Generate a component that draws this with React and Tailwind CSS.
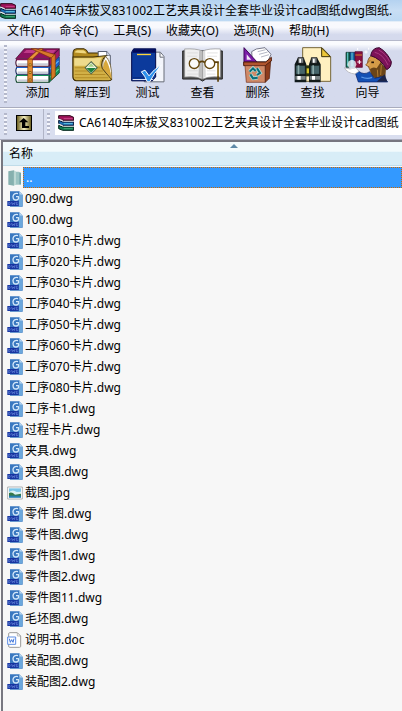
const menus = ["文件(F)", "命令(C)", "工具(S)", "收藏夹(O)", "选项(N)", "帮助(H)"];

const files = [
    "090.dwg", "100.dwg", "工序010卡片.dwg", "工序020卡片.dwg", "工序030卡片.dwg",
    "工序040卡片.dwg", "工序050卡片.dwg", "工序060卡片.dwg", "工序070卡片.dwg",
    "工序080卡片.dwg", "工序卡1.dwg", "过程卡片.dwg", "夹具.dwg", "夹具图.dwg",
    "截图.jpg", "零件 图.dwg", "零件图.dwg", "零件图1.dwg", "零件图2.dwg",
    "零件图11.dwg", "毛坯图.dwg", "说明书.doc", "装配图.dwg", "装配图2.dwg",
];

const BooksIcon = () => (
    <svg viewBox="0 0 134 104" className="w-[45px] h-[35px]">
        <path d="M28 2H132L102 32H2z" fill="#8e1260" stroke="#3a0424" strokeWidth="2" />
        <path d="M34 6H66L56 15H25zM96 6H122L114 15H86z" fill="#c03a88" />
        <path d="M102 32L132 3V24L102 53z" fill="#a01868" stroke="#3a0424" strokeWidth="2" />
        <path d="M102 56L132 26V50L102 78z" fill="#1b62cc" stroke="#06184c" strokeWidth="2" />
        <path d="M102 80L132 52V74L102 102z" fill="#12905a" stroke="#043018" strokeWidth="2" />
        <path d="M105 63L130 38" stroke="#67b8f4" strokeWidth="3" />
        <path d="M105 87L130 63" stroke="#5fd89a" strokeWidth="3" />
        <path d="M5 34H101V54H5Q0 44 5 34z" fill="#fff" stroke="#3a0424" strokeWidth="3" />
        <path d="M5 58H101V78H5Q0 68 5 58z" fill="#fff" stroke="#0a1c50" strokeWidth="3" />
        <path d="M5 82H101V102H5Q0 92 5 82z" fill="#fff" stroke="#063c20" strokeWidth="3" />
        <path d="M8 48H98M8 72H98M8 96H98" stroke="#c9ccd8" strokeWidth="5" />
        <path d="M4 35H102" stroke="#a01868" strokeWidth="3" />
        <path d="M4 58H102" stroke="#1b62cc" strokeWidth="3" />
        <path d="M4 82H102" stroke="#12905a" strokeWidth="3" />
        <path d="M38 33L72 2H84L52 33z" fill="#e9953c" stroke="#7c3404" strokeWidth="2" />
        <path d="M48 2H62L120 20L108 30z" fill="#d8782c" stroke="#7c3404" strokeWidth="2" />
        <path d="M38 33H52V102H38z" fill="#e38c30" stroke="#7c3404" strokeWidth="2" />
        <path d="M108 29L120 18V83L108 95z" fill="#d57824" stroke="#7c3404" strokeWidth="2" />
        <path d="M42 47h6v6h-6zM42 70h6v6h-6zM42 92h6v6h-6z" fill="#ffe95a" stroke="#6c3400" strokeWidth="2" />
    </svg>
);

const ExtractIcon = () => (
    <svg viewBox="0 0 122 100" className="w-[41px] h-[34px]">
        <path d="M3 14Q4 3 14 2H36Q44 4 48 14H88V96H12Q3 94 3 84z" fill="#b28a20" stroke="#3c2c04" strokeWidth="3" />
        <path d="M8 13Q10 7 16 6H34Q41 8 43 16z" fill="#f0d880" />
        <path d="M78 10H103L114 22V94H78z" fill="#fff" stroke="#596072" strokeWidth="3" />
        <path d="M103 10V22H114" fill="#c8d0e0" stroke="#596072" strokeWidth="2" />
        <path d="M92 30H109M96 36H109" stroke="#aab5cc" strokeWidth="3" />
        <path d="M3 26H62L102 22Q84 36 90 60L118 92Q116 98 106 97H12Q3 95 3 86z" fill="#d2b046" stroke="#3c2c04" strokeWidth="3" />
        <path d="M7 30H68L90 28Q80 40 83 52H7z" fill="#efdb8c" />
        <path d="M8 58H84M8 68H92M8 78H99M8 88H108" stroke="#b48c26" strokeWidth="3" />
        <path d="M92 60Q88 40 100 24Q120 44 118 92z" fill="#fff" stroke="#604606" strokeWidth="2" />
        <path d="M92 60Q94 42 101 34Q114 58 118 92z" fill="#d8a83c" />
        <path d="M57 40L75 58L57 76L39 58z" fill="#edf6df" stroke="#4d654a" strokeWidth="3" />
        <path d="M43 59H71L57 73z" fill="#1c8040" />
        <path d="M57 45L66 55H48z" fill="#a8cf88" />
    </svg>
);

const TestIcon = () => (
    <svg viewBox="0 0 102 104" className="w-[34px] h-[35px]">
        <path d="M62 12H88L99 25V101H40V12z" fill="#f3f5fb" stroke="#686d78" strokeWidth="3" />
        <path d="M87 13V27H98" fill="#fff" stroke="#686d78" strokeWidth="3" />
        <path d="M8 2H74V86L64 98H2V12z" fill="#0c3a9c" stroke="#000848" strokeWidth="3" />
        <path d="M8 3H73V14H4z" fill="#02095a" />
        <path d="M18 17H60V21H18z" fill="#ffd43a" />
        <path d="M6 89H69" stroke="#0a2878" strokeWidth="3" />
        <path d="M5 94H67" stroke="#d8e0f2" strokeWidth="3" />
        <path d="M31 71L42 66L54 83Q68 63 92 50Q68 76 56 101H49Q42 83 31 71z" fill="#2d91ed" stroke="#fff" strokeWidth="3" />
    </svg>
);

const ViewIcon = () => (
    <svg viewBox="0 0 124 104" className="w-[41px] h-[35px]">
        <path d="M2 8H122V93H72L62 99L52 93H2z" fill="#555" stroke="#222" strokeWidth="3" />
        <path d="M8 2Q42 0 61 8V93Q41 83 8 87z" fill="#efefef" stroke="#8c8c8c" strokeWidth="2" />
        <path d="M116 2Q82 0 63 8V93Q83 83 116 87z" fill="#fff" stroke="#8c8c8c" strokeWidth="2" />
        <path d="M52 6L61 10V91L50 85z" fill="#bebebe" />
        <path d="M70 7L63 10V91L72 85z" fill="#dadada" />
        <path d="M16 14H48M16 24H46M16 68H48M16 78H49M76 14H108M76 24H106M75 68H101M75 78H101" stroke="#d4d4d4" strokeWidth="2" />
        <circle cx="37" cy="46" r="15" fill="#fff" fillOpacity=".7" stroke="#65470d" strokeWidth="4" />
        <circle cx="84" cy="46" r="15" fill="#fff" fillOpacity=".7" stroke="#65470d" strokeWidth="4" />
        <path d="M52 43Q61 36 69 43M99 42H109V101" fill="none" stroke="#5c400a" strokeWidth="5" />
        <path d="M109 46V84" stroke="#e7bd3e" strokeWidth="2" />
    </svg>
);

const DeleteIcon = () => (
    <svg viewBox="0 0 90 108" className="w-[30px] h-[36px]">
        <path d="M26 14L40 6L66 2L84 22L74 44H28z" fill="#fff" stroke="#77798a" strokeWidth="3" />
        <path d="M44 14L68 8M48 22L74 15M54 30L78 23" stroke="#b4b7c4" strokeWidth="3" />
        <path d="M3 2L42 45H3z" fill="#7a1ca8" stroke="#3e0659" strokeWidth="3" />
        <path d="M11 22L25 38H11z" fill="#f3e6f8" />
        <path d="M2 45H68L85 31V42L68 56H2z" fill="#b0552e" stroke="#4c1c0c" strokeWidth="3" />
        <path d="M6 56H67V106H10z" fill="#d08a68" stroke="#6f2e19" strokeWidth="2" />
        <path d="M67 56L83 43L79 94L67 106z" fill="#8e3c1c" stroke="#4c1c0c" strokeWidth="2" />
        <path d="M20 74L30 64L38 72M42 64L51 78L42 84M44 92L30 94L22 82" fill="none" stroke="#a8dcd8" strokeWidth="11" />
        <path d="M20 74L30 64L38 72M42 64L51 78L42 84M44 92L30 94L22 82" fill="none" stroke="#0a6c78" strokeWidth="6" />
    </svg>
);

const FindIcon = () => (
    <svg viewBox="0 0 114 108" className="w-[38px] h-[36px]">
        <path d="M26 2H84L110 29V103H26z" fill="#fff0c0" stroke="#766638" strokeWidth="3" />
        <path d="M83 3V29H109z" fill="#ecc638" stroke="#3c3008" strokeWidth="3" />
        <path d="M12 32H29L37 52V106H2V52zM52 32H69L80 52V106H45V52z" fill="#111a1b" />
        <path d="M12 32H29V49H12zM52 32H69V49H52z" fill="#777d80" stroke="#111" strokeWidth="2" />
        <path d="M16 35H21V47H16zM57 35H62V47H57z" fill="#fff" />
        <path d="M5 55H34V82H5zM49 55H77V82H49z" fill="#46656a" stroke="#101717" strokeWidth="2" />
        <path d="M11 55H16V82H11zM55 55H60V82H55z" fill="#8eabaa" />
        <path d="M4 87H35V98H4zM47 87H78V98H47z" fill="#7c8586" />
        <path d="M10 87H20V98H10zM54 87H63V98H54z" fill="#fff" />
        <path d="M36 55H46V88H36z" fill="#29340d" />
        <path d="M38 64H45V79H38z" fill="#d7c72d" />
    </svg>
);

const WizardIcon = () => (
    <svg viewBox="0 0 144 108" className="w-[48px] h-[36px]">
        <path d="M6 16H18V61H6z" fill="#196b52" stroke="#082c24" strokeWidth="2" />
        <path d="M18 16H33V61H18z" fill="#1767aa" stroke="#08274e" strokeWidth="2" />
        <path d="M33 14H55V61H33z" fill="#8a1040" stroke="#4f0425" strokeWidth="2" />
        <path d="M11 17V58M24 17V58" stroke="#68cdd2" strokeWidth="3" />
        <path d="M34 24H54" stroke="#c8882c" strokeWidth="3" />
        <path d="M70 52Q71 28 88 24L112 40L108 66Q98 80 80 74z" fill="#d59b48" stroke="#67380e" strokeWidth="2" />
        <path d="M78 40L65 54L76 60" fill="#e2ac60" stroke="#74410f" strokeWidth="2" />
        <path d="M82 46H90" stroke="#241306" strokeWidth="5" />
        <path d="M78 66Q88 58 98 64L110 46L126 64L124 92L104 98Q80 94 78 66z" fill="#6a4418" />
        <path d="M112 54L110 84M100 68L102 92" stroke="#b07c30" strokeWidth="3" />
        <path d="M80 26Q84 2 106 2Q130 16 142 44Q142 62 128 68Q110 34 80 26z" fill="#7c1258" stroke="#38042c" strokeWidth="3" />
        <path d="M92 16Q116 20 132 54M104 9Q126 20 137 44" fill="none" stroke="#a83a80" strokeWidth="3" />
        <path d="M34 78L43 72Q60 86 77 74L91 94L118 88L131 105H43z" fill="#1450b4" stroke="#061d65" strokeWidth="2" />
        <path d="M98 104L122 82L130 104z" fill="#1c2448" />
        <path d="M52 90Q70 98 84 91" fill="none" stroke="#5c98e8" strokeWidth="4" />
        <path d="M1 62Q18 70 35 62L45 73L33 81Q10 79 1 62z" fill="#fff" stroke="#a5a4aa" strokeWidth="2" />
        <circle cx="24" cy="52" r="13" fill="#fff" fillOpacity=".75" />
        <path d="M46 39V51M40 45H52M66 10V20M61 15H71M74 2V8M41 3V9" stroke="#fff" strokeWidth="3" />
    </svg>
);

const tools = [
    { label: "添加", icon: <BooksIcon /> },
    { label: "解压到", icon: <ExtractIcon /> },
    { label: "测试", icon: <TestIcon /> },
    { label: "查看", icon: <ViewIcon /> },
    { label: "删除", icon: <DeleteIcon /> },
    { label: "查找", icon: <FindIcon /> },
    { label: "向导", icon: <WizardIcon /> },
];

const ArchiveIcon = () => (
    <svg viewBox="0 0 48 48" className="w-4 h-4 shrink-0">
        <path d="M2 2H36L47 7V16H14L2 11z" fill="#a0145c" stroke="#2c0216" strokeWidth="3" />
        <path d="M2 16L14 21H47V31H14L2 26z" fill="#1c6cb0" stroke="#041838" strokeWidth="3" />
        <path d="M2 31L14 36H47V46H14L2 41z" fill="#0f7a50" stroke="#02261a" strokeWidth="3" />
        <path d="M2 12L14 17M2 27L14 32" stroke="#fff" strokeWidth="3" />
        <path d="M17 19H45M17 34H45" stroke="#e4e8ec" strokeWidth="2" />
        <path d="M17 11H44" stroke="#e060a0" strokeWidth="2" />
        <path d="M17 26H44" stroke="#62c8e4" strokeWidth="3" />
        <path d="M17 41H44" stroke="#58c088" strokeWidth="2" />
    </svg>
);

const FolderIcon = () => (
    <svg viewBox="0 0 48 48" className="w-4 h-4 shrink-0">
        <path d="M4 4L21 1V47L4 44z" fill="#86b0ae" />
        <path d="M20 5H36L42 9V44H20z" fill="#9cc4c2" />
        <path d="M21 1L27 5V43L21 47z" fill="#bcd8d4" />
        <path d="M37 8H42V43H37z" fill="#72a5aa" />
    </svg>
);

const DwgIcon = () => (
    <svg viewBox="0 0 48 48" className="w-4 h-4 shrink-0">
        <path d="M9 1H37L47 11V47H9z" fill="#3a78c0" />
        <path d="M37 1L47 11H37z" fill="#b5d6f1" />
        <path d="M36 12H46V46H36z" fill="#6ba7dc" />
        <path d="M33 8Q20 5 18 16Q18 28 28 27Q37 25 34 17H27" fill="none" stroke="#d4e8fa" strokeWidth="4" />
        <path d="M1 30H35V45H1z" fill="#1634a0" />
        <path d="M5 34V41H8Q11 37 8 34zM14 33L16 41L19 36L22 41L24 33M32 34H28V41H32V38" fill="none" stroke="#6c8ce0" strokeWidth="2" />
    </svg>
);

const JpgIcon = () => (
    <svg viewBox="0 0 48 48" className="w-4 h-4 shrink-0">
        <path d="M2 6H46V42H2z" fill="#fff" stroke="#8c9093" strokeWidth="2" />
        <path d="M6 10H42V38H6z" fill="#7bc5e8" />
        <path d="M6 21Q18 12 29 21L42 20V31H6z" fill="#d9f1f3" />
        <path d="M6 24Q15 20 24 29L42 26V33H6z" fill="#34784a" />
        <path d="M6 32H42V38H6z" fill="#267cae" />
    </svg>
);

const DocIcon = () => (
    <svg viewBox="0 0 48 48" className="w-4 h-4 shrink-0">
        <path d="M8 2H31L41 12V43Q41 46 37 46H8Q5 46 5 42V6Q5 2 8 2z" fill="#fff" stroke="#9a9a9a" strokeWidth="3" />
        <path d="M31 3V12H40" fill="none" stroke="#9a9a9a" strokeWidth="2" />
        <path d="M2 15H26V37H2z" fill="#fff" stroke="#5d8de5" strokeWidth="3" />
        <path d="M7 20L10 31L14 23L18 31L21 20" fill="none" stroke="#3e75dc" strokeWidth="3" />
    </svg>
);

const FileIcon = ({ name }) => {
    if (name.endsWith(".jpg")) return <JpgIcon />;
    if (name.endsWith(".doc")) return <DocIcon />;
    return <DwgIcon />;
};

// dotted drag handle at the left of each bar
const Grip = () => (
    <div className="w-[3px] my-1 shrink-0 self-stretch bg-[linear-gradient(#b4b8cb_50%,#f5f6fc_50%)] bg-[length:3px_4px]" />
);

const App = () => {
    return (
        <div className="flex flex-col min-h-screen overflow-hidden bg-[#f7f7f7] text-black text-[12px] leading-4 whitespace-nowrap font-['Noto_Sans','Noto_Sans_CJK_SC',sans-serif]">
            <header className="flex items-center gap-[5px] h-[22px] bg-linear-to-b from-[#b4d2f0] via-[#c8def4] to-[#bdd9f3] border-b border-[#e4eef8]">
                <ArchiveIcon />
                <h1>CA6140车床拔叉831002工艺夹具设计全套毕业设计cad图纸dwg图纸.</h1>
            </header>

            <nav className="flex gap-[15px] h-[19px] pl-[7px] items-center bg-linear-to-b from-[#f8f9fd] from-30% to-[#d5daed] to-70% border-b border-[#b5b8ca]">
                {menus.map((menu) => (
                    <button key={menu}>{menu}</button>
                ))}
            </nav>

            <div className="flex h-[67px] pl-1 bg-linear-to-b from-[#fafbfe] from-5% to-[#d5daed] to-15% border-b border-[#a9acbd]">
                <Grip />
                <div className="flex pl-[3px]">
                    {tools.map((tool) => (
                        <button key={tool.label} className="flex flex-col items-center w-[55px] pt-[6px] shrink-0">
                            <span className="flex h-9 items-center">{tool.icon}</span>
                            <span className="mt-[2px]">{tool.label}</span>
                        </button>
                    ))}
                </div>
            </div>

            <div className="flex h-8 pl-1 bg-[#d9deef] border-t border-b border-t-white border-b-[#a9acbd]">
                <Grip />
                <button aria-label="向上" className="flex items-center justify-center w-[37px] pb-[3px] pr-[3px] border-r border-[#b0b4c6]">
                    <svg viewBox="0 0 48 48" className="w-4 h-4">
                        <defs>
                            <linearGradient id="up" x1="0" y1="0" x2="1" y2="0">
                                <stop offset="0" stopColor="#6e6224" />
                                <stop offset=".5" stopColor="#f4eec0" />
                                <stop offset="1" stopColor="#6e6224" />
                            </linearGradient>
                        </defs>
                        <path d="M0 0H48V48H0z" fill="#000" />
                        <path d="M3 3H45V45H3z" fill="url(#up)" />
                        <path d="M23 9L37 22H28V33H39V39H18V22H9z" fill="#000" />
                    </svg>
                </button>
                <div className="flex pl-[3px] min-w-0 flex-1">
                    <Grip />
                    <div className="flex items-center gap-[5px] flex-1 min-w-0 mt-[2px] mb-1 ml-[5px] pl-[3px] bg-white">
                        <ArchiveIcon />
                        <span>CA6140车床拔叉831002工艺夹具设计全套毕业设计cad图纸</span>
                    </div>
                </div>
            </div>

            <main className="flex-1 ml-[1px] border-t-2 border-l-2 border-[#777780]">
                <div className="relative flex items-center h-6 pl-[6px] bg-linear-to-b from-[#f2fafc] from-40% to-[#d8edf7] to-45% border-b border-[#c0dce9]">
                    <button>名称</button>
                    <svg viewBox="0 0 8 4" className="absolute left-[227px] top-[2px] w-2 h-1">
                        <path d="M0 4L4 0L8 4z" fill="#5d8aa8" />
                    </svg>
                </div>
                <ul className="pt-[1px] pl-1">
                    <li className="flex items-center h-[21px]">
                        <FolderIcon />
                        <span className="flex-1 h-full pl-[2px] leading-5 text-white bg-[#3399ff] border border-dotted border-[#cc6600]">..</span>
                    </li>
                    {files.map((file) => (
                        <li key={file} className="flex items-center gap-[2px] h-[21px]">
                            <FileIcon name={file} />
                            <span>{file}</span>
                        </li>
                    ))}
                </ul>
            </main>
        </div>
    );
};

export default App;
